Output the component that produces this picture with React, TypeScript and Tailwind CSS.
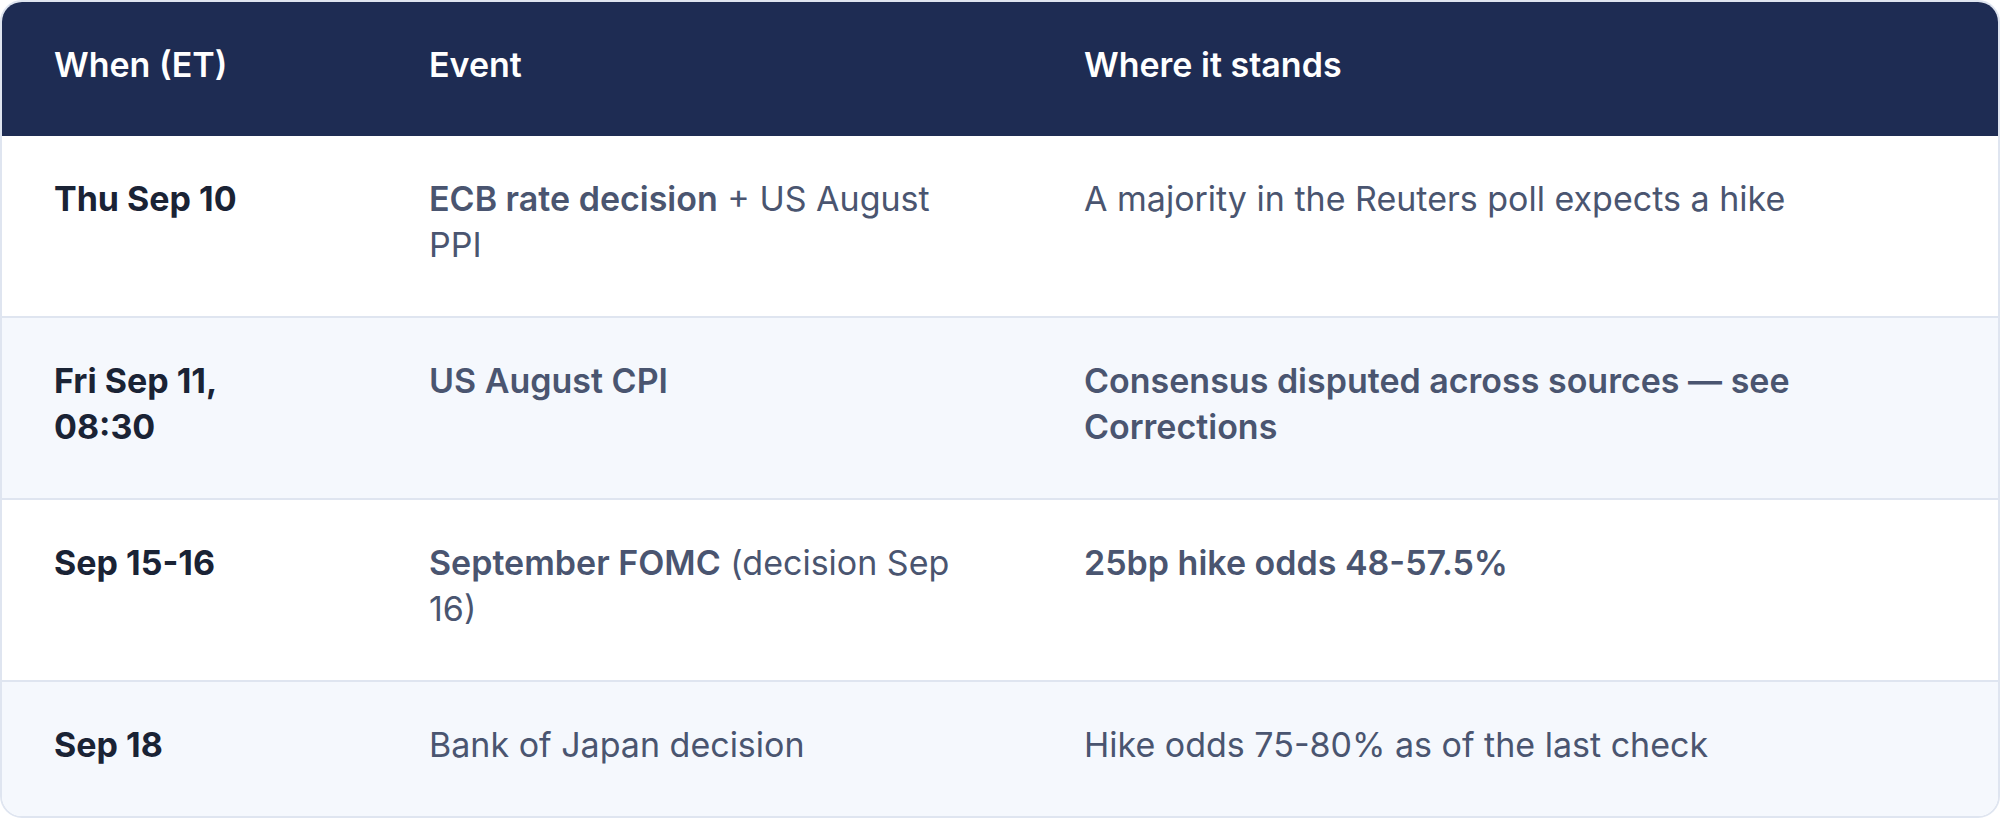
const ROWS = [
  {
    when: 'Thu Sep 10',
    event: (
      <>
        <span className="font-semibold">ECB rate decision</span> + US August PPI
      </>
    ),
    stands: <>A majority in the Reuters poll expects a hike</>,
  },
  {
    when: 'Fri Sep 11, 08:30',
    event: <span className="font-semibold">US August CPI</span>,
    stands: <span className="font-semibold">Consensus disputed across sources — see Corrections</span>,
  },
  {
    when: 'Sep 15-16',
    event: (
      <>
        <span className="font-semibold">September FOMC</span> (decision Sep 16)
      </>
    ),
    stands: <span className="font-semibold">25bp hike odds 48-57.5%</span>,
  },
  {
    when: 'Sep 18',
    event: <>Bank of Japan decision</>,
    stands: <>Hike odds 75-80% as of the last check</>,
  },
];

export default function App() {
  return (
    <div className="w-[2000px] h-[818px] bg-white font-['Inter','Noto_Sans',sans-serif]">
      <div className="overflow-hidden rounded-[22px] border-2 border-[#dfe5f0]">
        <table className="w-full table-fixed border-collapse text-left text-[34px] leading-[46px]">
          <colgroup>
            <col className="w-[375px]" />
            <col className="w-[655px]" />
            <col />
          </colgroup>
          <thead>
            <tr className="bg-[#1e2c53] text-white">
              <th className="px-[52px] pt-10 pb-12 font-semibold">When (ET)</th>
              <th className="px-[52px] pt-10 pb-12 font-semibold">Event</th>
              <th className="px-[52px] pt-10 pb-12 font-semibold">Where it stands</th>
            </tr>
          </thead>
          <tbody>
            {ROWS.map((r, i) => (
              <tr
                key={r.when}
                className={`${i % 2 === 1 ? 'bg-[#f5f8fd]' : 'bg-white'} ${i > 0 ? 'border-t-2 border-[#dfe5f0]' : ''} align-top`}
              >
                <td className="pl-[52px] pr-[72px] pt-10 pb-12 font-bold text-[#1a2335]">{r.when}</td>
                <td className="px-[52px] pt-10 pb-12 text-[#4a5570]">{r.event}</td>
                <td className="px-[52px] pt-10 pb-12 text-[#4a5570]">{r.stands}</td>
              </tr>
            ))}
          </tbody>
        </table>
      </div>
    </div>
  );
}
